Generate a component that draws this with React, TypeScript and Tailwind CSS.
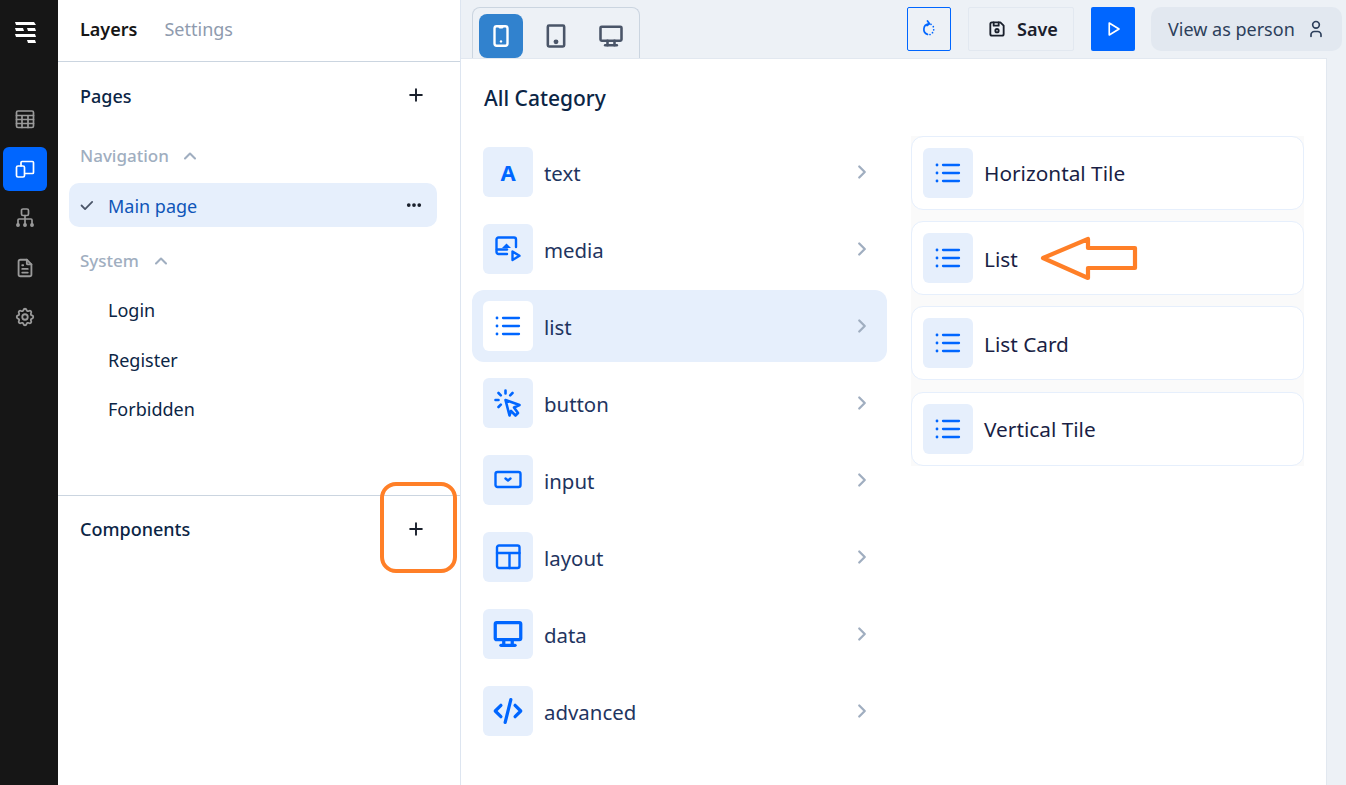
import React from 'react';
import {
  TbFileText,
  TbSettings,
  TbDeviceMobile,
  TbDeviceTablet,
  TbDeviceDesktop,
  TbCode,
  TbDeviceFloppy,
  TbPlayerPlay,
  TbUser,
  TbCheck,
  TbChevronUp,
  TbChevronRight,
  TbDots,
  TbPlus,
} from 'react-icons/tb';

const Logo = () => (
  <svg width="24" height="24" viewBox="0 0 24 24" fill="#fff" className="shrink-0">
    <polygon points="2,2 21,2 23,5 3,5" />
    <polygon points="2,8 10,8 11,11 3,11" />
    <polygon points="14,8 22,8 23,11 15,11" />
    <polygon points="2,14 22,14 23,17 3,17" />
    <polygon points="14,20 22,20 23,23 15,23" />
  </svg>
);

const railSvg = {
  width: 22,
  height: 22,
  viewBox: '0 0 22 22',
  fill: 'none',
  stroke: 'currentColor',
  strokeWidth: 1.7,
  strokeLinecap: 'round' as const,
  strokeLinejoin: 'round' as const,
};

const GridIcon = () => (
  <svg {...railSvg}>
    <rect x="2.500" y="3" width="17" height="16.500" rx="1.500" />
    <path d="M2.500 7.500h17M2.500 11.500h17M2.500 15.500h17M8 7.500v12M14 7.500v12" />
  </svg>
);

const DevicesIcon = () => (
  <svg {...railSvg}>
    <path d="M8 3.500h10.500a1 1 0 0 1 1 1v10a1 1 0 0 1-1 1H11M8 3.500a1 1 0 0 0-1 1V8" />
    <rect x="2.500" y="8" width="8" height="11" rx="1.500" />
  </svg>
);

const TreeIcon = () => (
  <svg {...railSvg}>
    <rect x="7.500" y="2" width="7" height="6.500" rx="1.500" />
    <path d="M11 8.500V17M4 17v-4a1 1 0 0 1 1-1h12a1 1 0 0 1 1 1v4" />
    <circle cx="4" cy="18" r="1.100" fill="currentColor" />
    <circle cx="11" cy="18" r="1.100" fill="currentColor" />
    <circle cx="18" cy="18" r="1.100" fill="currentColor" />
  </svg>
);

const blueSvg = {
  fill: 'none',
  stroke: '#0066ff',
  strokeWidth: 2.4,
  strokeLinecap: 'round' as const,
  strokeLinejoin: 'round' as const,
};

const ListIcon = () => (
  <svg width="30" height="30" viewBox="0 0 30 30" {...blueSvg} strokeWidth={2.300}>
    <path d="M10 7h16M10 15h16M10 23h16" />
    <path d="M4 7h.01M4 15h.01M4 23h.01" strokeWidth={2.800} />
  </svg>
);

const MediaIcon = () => (
  <svg width="30" height="30" viewBox="0 0 30 30" {...blueSvg}>
    <path d="M14 20H5.500a2 2 0 0 1-2-2V5.500a2 2 0 0 1 2-2H21a2 2 0 0 1 2 2V13" />
    <path d="M4 15.500h10" />
    <path d="M9 14l4.500-4.500 4.500 4.500z" fill="#0066ff" stroke="none" />
    <path d="M19.500 17.500v8.500l7-4.200z" />
  </svg>
);

const ClickIcon = () => (
  <svg width="30" height="30" viewBox="0 0 30 30" {...blueSvg} strokeWidth={2.600}>
    <path d="M12.500 12l14 5-5.500 2.500L25 25l-2.500 2.500-4.500-4.500-1.500 4.500z" />
    <path d="M12.500 2.500v3M5.500 5l2.300 2.300M19.500 5l-2.300 2.300M2.500 12h3M5.500 19l2.300-2.300" />
  </svg>
);

const InputIcon = () => (
  <svg width="30" height="30" viewBox="0 0 30 30" {...blueSvg}>
    <rect x="2.500" y="7" width="25" height="15" rx="2" />
    <path d="M12.500 13.500l2.500 2 2.500-2" />
  </svg>
);

const LayoutIcon = () => (
  <svg width="30" height="30" viewBox="0 0 30 30" {...blueSvg}>
    <rect x="4" y="3.500" width="22.500" height="22.500" rx="2" />
    <path d="M4 11h22.500M16.500 11v15" />
  </svg>
);

const RefreshIcon = () => (
  <svg width="18" height="18" viewBox="0 0 18 18" fill="none" stroke="#0066ff" strokeWidth="1.700" strokeLinecap="round" strokeLinejoin="round">
    <path d="M8.500 3.800a5.500 5.500 0 0 0-1 10.600" />
    <path d="M7.500 1l2 2.800-2.500 1.700" />
    <path d="M11 4.300l.01 0M13.300 6.700l.01 0M13.700 9.800l.01 0M12.500 12.700l.01 0M10 14.500l.01 0" />
  </svg>
);

const categories = [
  { name: 'text', icon: <span className="text-[22px] font-bold text-[#0066ff]">A</span> },
  { name: 'media', icon: <MediaIcon /> },
  { name: 'list', icon: <ListIcon />, active: true },
  { name: 'button', icon: <ClickIcon /> },
  { name: 'input', icon: <InputIcon /> },
  { name: 'layout', icon: <LayoutIcon /> },
  { name: 'data', icon: <TbDeviceDesktop size={34} color="#0066ff" strokeWidth={2.300} /> },
  { name: 'advanced', icon: <TbCode size={34} color="#0066ff" strokeWidth={2.300} /> },
];

const widgets = ['Horizontal Tile', 'List', 'List Card', 'Vertical Tile'];

const navIcons = [
  <GridIcon />,
  <DevicesIcon />,
  <TreeIcon />,
  <TbFileText size={22} />,
  <TbSettings size={22} />,
];

export default function App() {
  return (
    <div className="relative flex h-[785px] w-[1346px] overflow-hidden bg-white font-['Noto_Sans',sans-serif]">
      {/* icon rail */}
      <div className="flex w-[58px] shrink-0 flex-col bg-[#161616] pl-[3px] pt-[20px]">
        <div className="pl-[10px]">
          <Logo />
        </div>
        <div className="mt-[53px] flex flex-col gap-[5.500px]">
          {navIcons.map((icon, i) => (
            <div
              key={i}
              className={`flex h-[44px] w-[44px] items-center justify-center rounded-[6px] ${
                i === 1 ? 'bg-[#0066ff] text-white' : 'text-[#9a9a9a]'
              }`}
            >
              {icon}
            </div>
          ))}
        </div>
      </div>

      {/* layers panel */}
      <div className="flex w-[403px] shrink-0 flex-col border-r border-[#dde5f0]">
        <div className="flex h-[62px] shrink-0 items-center gap-[27px] border-b border-[#cbd5e0] pl-[22px] pb-[3px] text-[18px]">
          <span className="font-semibold text-[#161616]">Layers</span>
          <span className="text-[#8f9bae]">Settings</span>
        </div>
        <div className="h-[434px] shrink-0 border-b border-[#cbd5e0]">
          <div className="flex h-[68px] items-center justify-between pl-[22px] pr-[34px] text-[18px] font-medium text-[#0b2545]">
            <span>Pages</span>
            <TbPlus size={20} strokeWidth={2.300} className="-mt-[2px] text-[#1a202c]" />
          </div>
          <div className="mt-[7px] flex h-[38px] items-center gap-[11px] pl-[22px] text-[17px] font-medium text-[#a0aec0]">
            <span>Navigation</span>
            <TbChevronUp size={20} strokeWidth={2.500} />
          </div>
          <div className="ml-[11px] mt-[8px] flex h-[44px] w-[368px] items-center rounded-[10px] bg-[#e6effc] pl-[9px] pr-[14px] text-[18px] text-[#0f55b8]">
            <TbCheck size={17} strokeWidth={2.500} className="text-[#4a5568]" />
            <span className="ml-[13px] flex-1 pt-[2px]">Main page</span>
            <TbDots size={18} strokeWidth={3} className="text-[#1a202c]" />
          </div>
          <div className="mt-[15px] flex h-[38px] items-center gap-[12px] pl-[22px] text-[17px] font-medium text-[#a0aec0]">
            <span>System</span>
            <TbChevronUp size={20} strokeWidth={2.500} />
          </div>
          <div className="mt-[6px] flex flex-col pl-[50px] text-[18px] text-[#0b2545]">
            <span className="flex h-[49px] items-center">Login</span>
            <span className="flex h-[49px] items-center pt-[2px]">Register</span>
            <span className="flex h-[49px] items-center pt-[2px]">Forbidden</span>
          </div>
        </div>
        <div className="flex h-[67px] items-center justify-between pl-[22px] pr-[34px] text-[18px] font-medium text-[#0b2545]">
          <span>Components</span>
          <TbPlus size={20} strokeWidth={2.300} className="-mt-[2px] text-[#1a202c]" />
        </div>
      </div>

      {/* builder area */}
      <div className="flex min-w-0 flex-1 flex-col bg-[#edf1f6]">
        <div className="flex h-[58px] shrink-0 items-start justify-between pl-[11px] pr-[4px] pt-[7px]">
          <div className="flex h-[51px] w-[168px] gap-[1px] rounded-t-[8px] border border-b-0 border-[#cbd5e0] pl-[6px] pt-[6px]">
            <div className="flex h-[44px] w-[44px] items-center justify-center rounded-[8px] bg-[#3182ce] text-white">
              <TbDeviceMobile size={26} strokeWidth={2.200} />
            </div>
            <div className="ml-[10px] flex h-[44px] w-[44px] items-center justify-center text-[#4a5568]">
              <TbDeviceTablet size={28} strokeWidth={2.200} />
            </div>
            <div className="ml-[10px] flex h-[44px] w-[44px] items-center justify-center text-[#4a5568]">
              <TbDeviceDesktop size={28} strokeWidth={2.200} />
            </div>
          </div>
          <div className="flex items-center">
            <div className="flex h-[44px] w-[44px] items-center justify-center rounded-[2px] border border-[#0066ff]">
              <RefreshIcon />
            </div>
            <div className="ml-[17px] flex h-[44px] w-[106px] items-center gap-[10px] rounded-[2px] border border-[#e2e8f0] pl-[18px] text-[18px] font-semibold text-[#1a202c]">
              <TbDeviceFloppy size={20} strokeWidth={2.200} />
              <span>Save</span>
            </div>
            <div className="ml-[17px] flex h-[44px] w-[44px] items-center justify-center rounded-[2px] bg-[#0066ff] text-white">
              <TbPlayerPlay size={18} strokeWidth={2.200} />
            </div>
            <div className="ml-[16px] flex h-[44px] w-[191px] items-center gap-[11px] rounded-[10px] bg-[#e2e8f0] pl-[17px] text-[18px] text-[#2d3f5b]">
              <span>View as person</span>
              <TbUser size={20} />
            </div>
          </div>
        </div>

        <div className="mr-[19px] flex min-h-0 flex-1 border-r border-t border-[#e2e8f0] bg-white">
          <div className="w-[426px] shrink-0 pl-[11px]">
            <div className="flex h-[77px] items-center pl-[12px] pt-[3px] text-[21px] font-medium text-[#0b2545]">
              All Category
            </div>
            <div className="flex w-[415px] flex-col gap-[5px]">
              {categories.map((c) => (
                <div
                  key={c.name}
                  className={`flex h-[72px] items-center rounded-[12px] pl-[11px] pr-[14px] ${
                    c.active ? 'bg-[#e6effc]' : ''
                  }`}
                >
                  <div
                    className={`flex h-[50px] w-[50px] shrink-0 items-center justify-center rounded-[6px] ${
                      c.active ? 'bg-white' : 'bg-[#e6effc]'
                    }`}
                  >
                    {c.icon}
                  </div>
                  <span className="ml-[11px] flex-1 pt-[2px] text-[20.400px] text-[#1f3560]">{c.name}</span>
                  <TbChevronRight size={22} strokeWidth={2.500} className="text-[#a0aec0]" />
                </div>
              ))}
            </div>
          </div>
          <div className="ml-[24px] mt-[77px] flex h-[330px] w-[393px] flex-col gap-[11.200px] bg-[#fafafa]">
            {widgets.map((w) => (
              <div
                key={w}
                className="flex h-[74px] shrink-0 items-center rounded-[12px] border border-[#e6effc] bg-white pl-[11px]"
              >
                <div className="flex h-[50px] w-[50px] shrink-0 items-center justify-center rounded-[6px] bg-[#e6effc]">
                  <ListIcon />
                </div>
                <span className="ml-[11px] pt-[2px] text-[20.800px] text-[#1a1f45]">{w}</span>
              </div>
            ))}
          </div>
        </div>
      </div>

      {/* annotations drawn over the screenshot */}
      <div className="absolute left-[380px] top-[482px] h-[91px] w-[77px] rounded-[16px] border-[4px] border-[#ff7f27]" />
      <svg className="absolute left-[1040px] top-[236px]" width="100" height="46" viewBox="0 0 100 46" fill="none">
        <path d="M3 22L48 3V12H95V32H48V42Z" fill="#fff" stroke="#ff7f27" strokeWidth="4.200" strokeLinejoin="round" />
      </svg>
    </div>
  );
}
